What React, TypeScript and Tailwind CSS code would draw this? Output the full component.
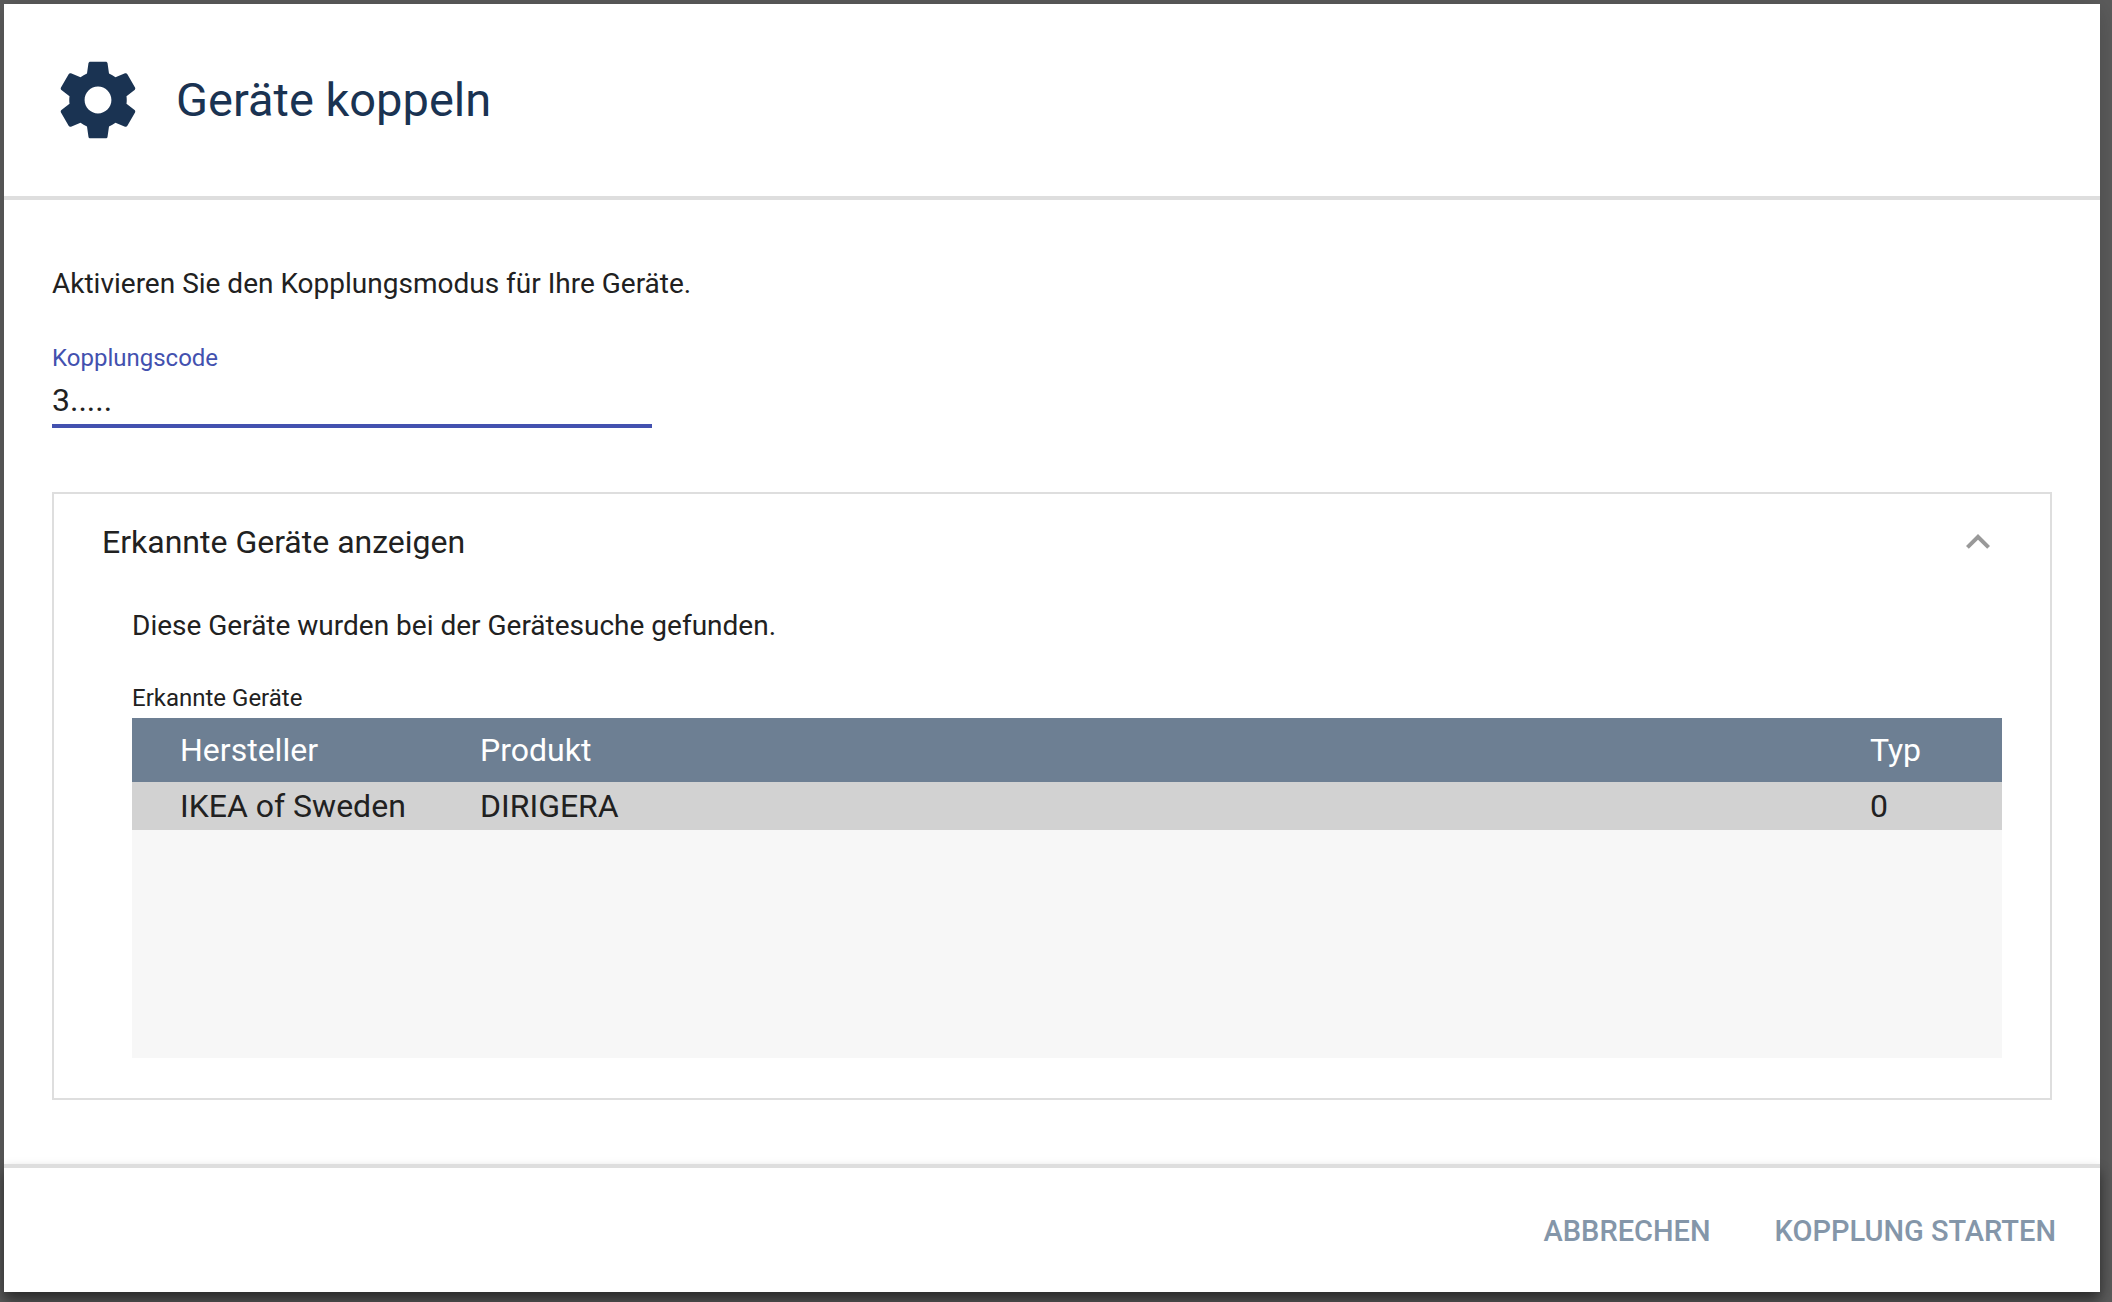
import { useState } from "react";

interface Device {
  manufacturer: string;
  product: string;
  type: number;
}

const DEVICES: Device[] = [
  { manufacturer: "IKEA of Sweden", product: "DIRIGERA", type: 0 },
];

function GearIcon() {
  return (
    <svg viewBox="0 0 24 24" className="size-[92px]" fill="currentColor" aria-hidden="true">
      <path d="M19.43 12.98c.04-.32.07-.64.07-.98s-.03-.66-.07-.98l2.11-1.65c.19-.15.24-.42.12-.64l-2-3.46c-.12-.22-.39-.3-.61-.22l-2.49 1c-.52-.4-1.08-.73-1.69-.98l-.38-2.65C14.46 2.18 14.25 2 14 2h-4c-.25 0-.46.18-.49.42l-.38 2.65c-.61.25-1.17.59-1.69.98l-2.49-1c-.23-.09-.49 0-.61.22l-2 3.46c-.13.22-.07.49.12.64l2.11 1.65c-.04.32-.07.65-.07.98s.03.66.07.98l-2.11 1.65c-.19.15-.24.42-.12.64l2 3.46c.12.22.39.3.61.22l2.49-1c.52.4 1.08.73 1.69.98l.38 2.65c.03.24.24.42.49.42h4c.25 0 .46-.18.49-.42l.38-2.65c.61-.25 1.17-.59 1.69-.98l2.49 1c.23.09.49 0 .61-.22l2-3.46c.12-.22.07-.49-.12-.64l-2.11-1.65zM12 15.5c-1.93 0-3.5-1.57-3.5-3.5s1.57-3.5 3.5-3.5 3.5 1.57 3.5 3.5-1.57 3.5-3.5 3.5z" />
    </svg>
  );
}

function DeviceTable({ devices }: { devices: Device[] }) {
  return (
    <div className="min-h-[340px] bg-[#f7f7f7]">
      <table className="w-full table-fixed text-left text-[32px] leading-[48px]" aria-labelledby="devices-label">
        <thead className="bg-[#6d7f93] text-white">
          <tr className="h-16">
            <th className="w-[348px] pl-12 font-normal">Hersteller</th>
            <th className="font-normal">Produkt</th>
            <th className="w-[132px] font-normal">Typ</th>
          </tr>
        </thead>
        <tbody>
          {devices.map((d) => (
            <tr key={d.product} className="h-12 bg-[#d2d2d2]">
              <td className="pl-12">{d.manufacturer}</td>
              <td>{d.product}</td>
              <td>{d.type}</td>
            </tr>
          ))}
        </tbody>
      </table>
    </div>
  );
}

export default function App() {
  const [code, setCode] = useState("3.....");
  const [open, setOpen] = useState(true);

  return (
    <div className="flex min-h-screen bg-[#5c5c5c] pt-1 pr-3 pb-[10px] pl-1 font-[Roboto,sans-serif] text-[#212121]">
      <div
        role="dialog"
        aria-labelledby="dialog-title"
        className="flex flex-1 flex-col bg-white shadow-[0_4px_24px_0_rgba(0,0,0,0.2)]"
      >
        <header className="flex h-[196px] items-center gap-8 border-b-4 border-[#dedede] px-12 text-[#1a3352]">
          <GearIcon />
          <h1 id="dialog-title" className="text-[47px] leading-[64px]">
            Geräte koppeln
          </h1>
        </header>

        <main className="flex-1 px-12 pt-16 pb-16">
          <p className="text-[28px] leading-[40px]">Aktivieren Sie den Kopplungsmodus für Ihre Geräte.</p>

          <div className="mt-10 flex w-[600px] max-w-full flex-col">
            <label htmlFor="pairing-code" className="text-[24px] leading-[28px] text-[#4351af]">
              Kopplungscode
            </label>
            <input
              id="pairing-code"
              value={code}
              onChange={(e) => setCode(e.target.value)}
              className="h-14 border-b-4 border-[#4351af] pt-1 text-[32px] leading-[48px] outline-none"
            />
          </div>

          <section className="mt-16 border-2 border-[#dedede] px-12 pb-10">
            <button
              type="button"
              onClick={() => setOpen(!open)}
              aria-expanded={open}
              className="flex h-24 w-full items-center justify-between text-[32px] leading-[48px]"
            >
              Erkannte Geräte anzeigen
              <svg
                viewBox="0 0 24 24"
                className={open ? "size-12 text-[#999999]" : "size-12 rotate-180 text-[#999999]"}
                fill="currentColor"
                aria-hidden="true"
              >
                <path d="M12 8l-6 6 1.41 1.41L12 10.83l4.59 4.58L18 14z" />
              </svg>
            </button>

            {open && (
              <div className="pt-4 pl-[30px]">
                <p className="text-[28px] leading-[40px]">Diese Geräte wurden bei der Gerätesuche gefunden.</p>
                <p id="devices-label" className="mt-[38px] mb-[6px] text-[24px] leading-[28px]">
                  Erkannte Geräte
                </p>
                <DeviceTable devices={DEVICES} />
              </div>
            )}
          </section>
        </main>

        <footer className="flex h-32 items-center justify-end border-t-4 border-[#dedede] pt-[2px] pr-3 text-[29px] leading-[40px] font-medium text-[#8496a9] shadow-[0_8px_12px_rgba(0,0,0,0.45)]">
          <button type="button" className="px-8 uppercase">
            Abbrechen
          </button>
          <button type="button" className="px-8 uppercase">
            Kopplung starten
          </button>
        </footer>
      </div>
    </div>
  );
}
